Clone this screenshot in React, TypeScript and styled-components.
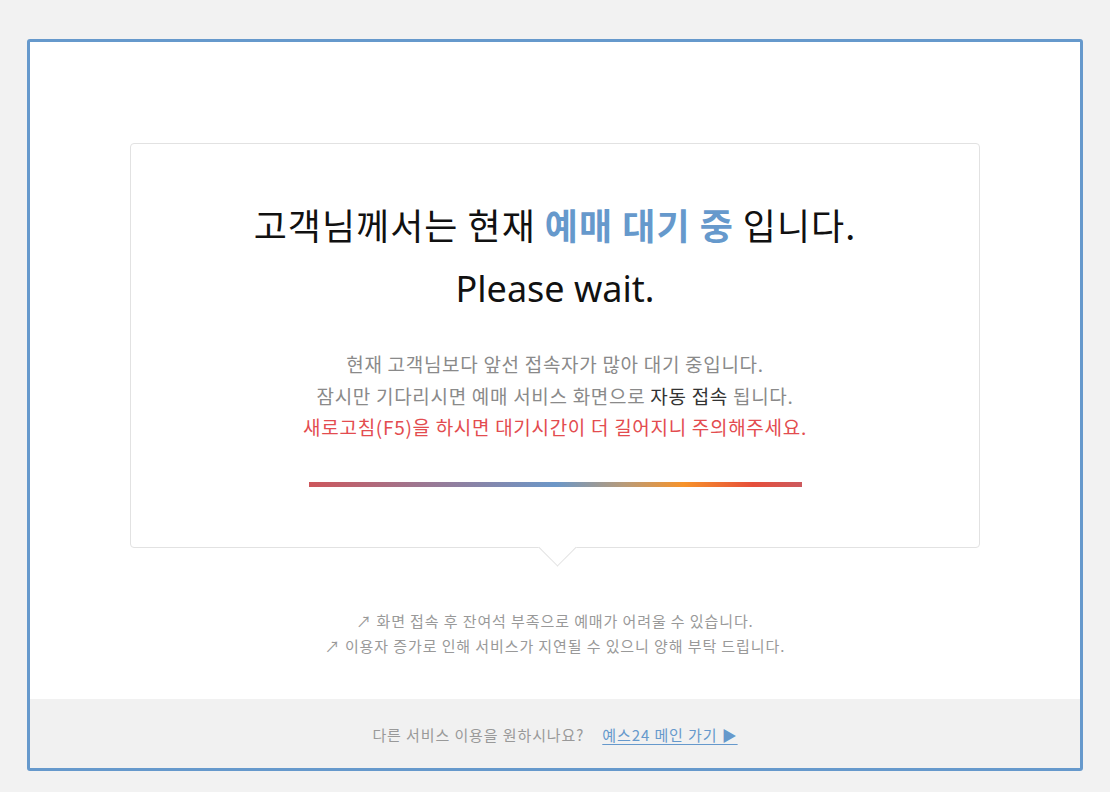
import React from "react";
import styled, { createGlobalStyle } from "styled-components";

const GlobalStyle = createGlobalStyle`
  html, body {
    margin: 0;
    padding: 0;
    background: #f2f2f2;
  }
  body {
    font-family: "Noto Sans CJK KR", "Noto Sans", sans-serif;
    color: #222;
  }
  * { box-sizing: border-box; }
`;

const Page = styled.div`
  padding-top: 39px;
`;

const Frame = styled.div`
  width: 1056px;
  height: 732px;
  margin: 0 auto;
  background: #fff;
  border: 3px solid #6699cc;
  border-radius: 3px;
  display: flex;
  flex-direction: column;
`;

const Main = styled.main`
  flex: 1;
  padding-top: 101px;
  display: flex;
  flex-direction: column;
  align-items: center;
`;

const Card = styled.section`
  position: relative;
  width: 850px;
  height: 405px;
  border: 1px solid #e2e2e2;
  border-radius: 4px;
  background: #fff;
  padding-top: 56px;
  display: flex;
  flex-direction: column;
  align-items: center;
  text-align: center;

  &::after {
    content: "";
    position: absolute;
    left: 413px;
    bottom: -14px;
    width: 26px;
    height: 26px;
    background: #fff;
    border-right: 1px solid #e2e2e2;
    border-bottom: 1px solid #e2e2e2;
    transform: rotate(45deg);
  }
`;

const Title = styled.h1`
  margin: 0;
  font-size: 36px;
  font-weight: 400;
  line-height: 48px;
  color: #111;
  letter-spacing: 1px;
`;

const Highlight = styled.strong`
  color: #6699cc;
  font-weight: 700;
`;

const Subtitle = styled.h2`
  margin: 17px 0 0;
  font-family: "Noto Sans", "Noto Sans CJK KR", sans-serif;
  font-size: 36px;
  font-weight: 400;
  line-height: 48px;
  color: #111;
`;

const Message = styled.div`
  margin-top: 35px;
  font-size: 19px;
  line-height: 31.5px;
  color: #8a8a8a;
  letter-spacing: 0.7px;
`;

const Line = styled.p<{ $tone?: "warn" }>`
  margin: 0;
  color: ${(p) => (p.$tone === "warn" ? "#e34c4f" : "inherit")};
`;

const Dark = styled.span`
  color: #333;
`;

const Progress = styled.div`
  margin-top: 39px;
  width: 493px;
  height: 5px;
  background: linear-gradient(
    to right,
    #cd565b 0%,
    #9e7690 22%,
    #6b97c8 50%,
    #b99b78 64%,
    #f7932a 76%,
    #e64e3a 90%,
    #cc5a5e 100%
  );
`;

const Notes = styled.ul`
  list-style: none;
  margin: 60px 0 0;
  padding: 0;
  text-align: center;
  font-size: 15px;
  line-height: 25px;
  color: #999;
  letter-spacing: 0.9px;
`;

const Note = styled.li`
  margin: 0;
`;

const Footer = styled.footer`
  height: 69px;
  background: #f1f1f1;
  display: flex;
  align-items: center;
  justify-content: center;
  gap: 18px;
  font-size: 15px;
  color: #999;
  letter-spacing: 0.9px;
  padding-top: 2px;
`;

const HomeLink = styled.a`
  color: #6699cc;
  text-decoration: underline;
  text-underline-offset: 3px;
`;

export default function App() {
  return (
    <>
      <GlobalStyle />
      <Page>
        <Frame>
          <Main>
            <Card>
              <Title>
                고객님께서는 현재 <Highlight>예매 대기 중</Highlight> 입니다.
              </Title>
              <Subtitle>Please wait.</Subtitle>
              <Message>
                <Line>현재 고객님보다 앞선 접속자가 많아 대기 중입니다.</Line>
                <Line>
                  잠시만 기다리시면 예매 서비스 화면으로 <Dark>자동 접속</Dark> 됩니다.
                </Line>
                <Line $tone="warn">
                  새로고침(F5)을 하시면 대기시간이 더 길어지니 주의해주세요.
                </Line>
              </Message>
              <Progress />
            </Card>
            <Notes>
              <Note>↗ 화면 접속 후 잔여석 부족으로 예매가 어려울 수 있습니다.</Note>
              <Note>↗ 이용자 증가로 인해 서비스가 지연될 수 있으니 양해 부탁 드립니다.</Note>
            </Notes>
          </Main>
          <Footer>
            <span>다른 서비스 이용을 원하시나요?</span>
            <HomeLink href="#">예스24 메인 가기 ▶</HomeLink>
          </Footer>
        </Frame>
      </Page>
    </>
  );
}
